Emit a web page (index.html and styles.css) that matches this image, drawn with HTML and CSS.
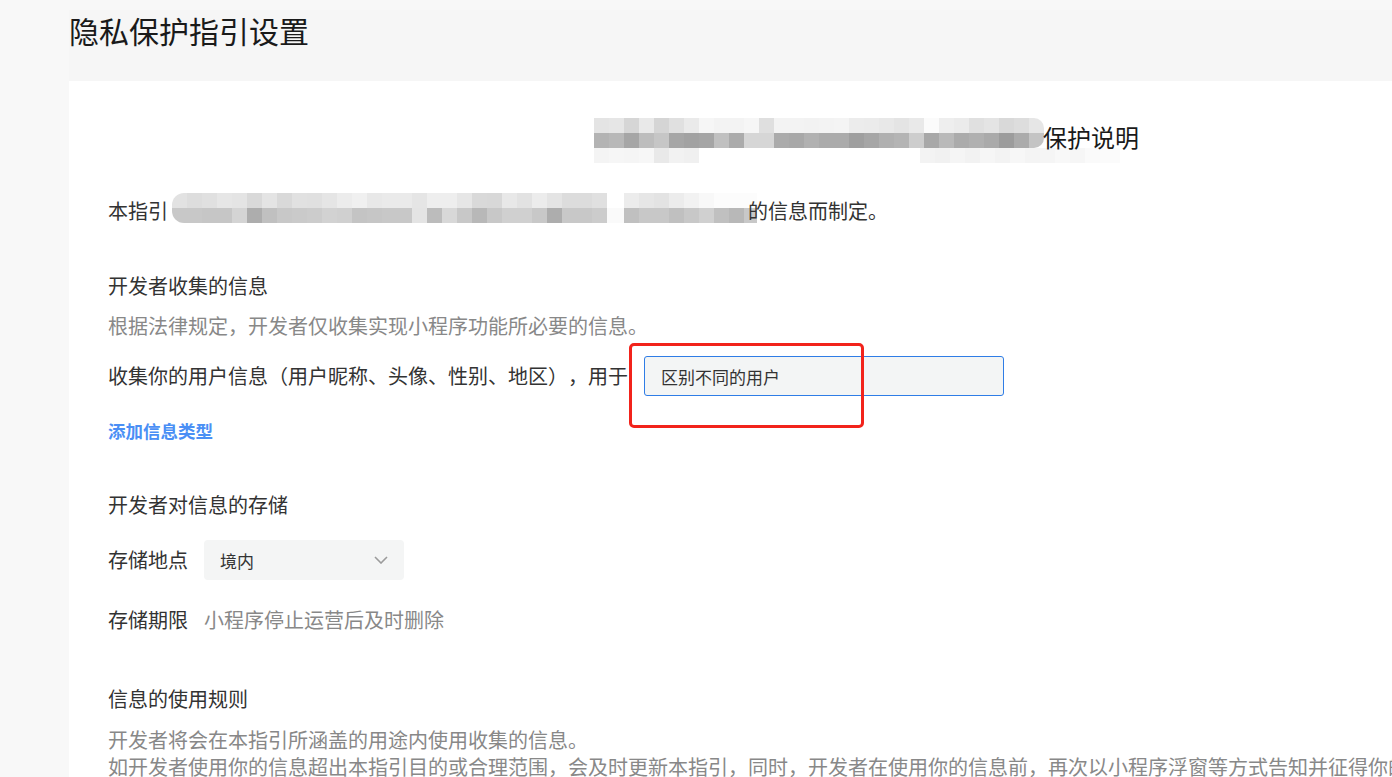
FILE: index.html
```html
<!DOCTYPE html>
<html lang="zh-CN">
<head>
<meta charset="UTF-8">
<meta name="viewport" content="width=device-width, initial-scale=1.0">
<title>隐私保护指引设置</title>
<link rel="stylesheet" href="styles.css">
</head>
<body>

<div class="page">
  <div class="page-head">
    <h1 class="page-title">隐私保护指引设置</h1>
  </div>

  <div class="panel">
    <div class="doc-title">
      <div class="mosaic mosaic-head">
        <div class="m-row head-r1"></div>
        <div class="m-row head-r2"></div>
        <div class="m-row head-r3"></div>
      </div>
      <span class="doc-title-text">保护说明</span>
    </div>

    <div class="intro">
      <span>本指引</span>
      <div class="mosaic mosaic-intro">
        <div class="m-row intro-r1"></div>
        <div class="m-row intro-r2"></div>
      </div>
      <span>的信息而制定。</span>
    </div>

    <!-- 收集的信息 -->
    <div class="section section-collect">
      <h2 class="section-title">开发者收集的信息</h2>
      <p class="hint">根据法律规定，开发者仅收集实现小程序功能所必要的信息。</p>
      <div class="collect-row">
        <span class="collect-label">收集你的用户信息（用户昵称、头像、性别、地区），用于</span>
        <span class="input-wrap">
          <input class="purpose-input" type="text" value="区别不同的用户">
          <span class="mark"></span>
        </span>
      </div>
      <a class="add-link" href="#">添加信息类型</a>
    </div>

    <!-- 存储 -->
    <div class="section section-store">
      <h2 class="section-title">开发者对信息的存储</h2>
      <div class="form-row">
        <span class="form-label">存储地点</span>
        <div class="select">
          <span>境内</span>
          <svg class="chevron" width="14" height="8" viewBox="0 0 14 8">
            <polyline points="1,1 7,7 13,1" fill="none" stroke="#9b9b9b" stroke-width="1.6"/>
          </svg>
        </div>
      </div>
      <div class="form-row form-row-text">
        <span class="form-label">存储期限</span>
        <span class="form-value">小程序停止运营后及时删除</span>
      </div>
    </div>

    <!-- 使用规则 -->
    <div class="section section-use">
      <h2 class="section-title">信息的使用规则</h2>
      <div class="rules">
        <p>开发者将会在本指引所涵盖的用途内使用收集的信息。</p>
        <p>如开发者使用你的信息超出本指引目的或合理范围，会及时更新本指引，同时，开发者在使用你的信息前，再次以小程序浮窗等方式告知并征得你的同意。</p>
      </div>
    </div>
  </div>
</div>

</body>
</html>
```

FILE: styles.css
```css
/* General */
html, body {
  overflow: hidden;
}

body {
  margin: 0;
  padding: 0;
  background-color: #f8f8f8;
  color: #333;
  font-family: "Noto Sans CJK SC", "Noto Sans", sans-serif;
  font-size: 20px;
  text-spacing-trim: space-all;
}

p, h1, h2 {
  margin: 0;
}

.page {
  padding-left: 69px;
  padding-top: 10px;
}

.page-head {
  height: 71px;
  background-color: #f6f6f6;
}

.page-title {
  font-size: 30px;
  font-weight: normal;
  line-height: 40px;
  color: #1a1a1a;
}

.panel {
  background-color: #fff;
  padding: 37px 0 40px 39px;
  height: 700px;
}

/* Mosaic (blurred text) */
.mosaic .m-row {
  height: 15px;
}

.doc-title {
  display: flex;
  align-items: flex-start;
  padding-left: 486px;
  height: 45px;
}

.mosaic-head {
  width: 450px;
  flex: none;
}

.head-r1 {
  border-top-right-radius: 10px;
  background: linear-gradient(90deg, #e4e4e4 15px, #e6e6e6 0 30px, #d6d6d6 0 45px, #e9e9e9 0 60px, #d5d5d5 0 75px, #e0e0e0 0 90px, #eaeaea 0 105px, #f6f6f6 0 120px, #f3f3f3 0 135px, #f3f3f3 0 150px, #f6f6f6 0 165px, #dfdfdf 0 180px, #f3f3f3 0 195px, #f3f3f3 0 210px, #f2f2f2 0 225px, #f3f3f3 0 240px, #f4f4f4 0 255px, #ececec 0 270px, #ebebeb 0 285px, #e8e8e8 0 300px, #e4e4e4 0 315px, #e9e9e9 0 330px, #fbfbfb 0 345px, #eeeeee 0 360px, #ebebeb 0 375px, #e0e0e0 0 390px, #e4e4e4 0 405px, #d9d9d9 0 420px, #dddddd 0 435px, #e6e6e6 0 450px);
}

.head-r2 {
  border-bottom-right-radius: 10px;
  background: linear-gradient(90deg, #b3b3b3 15px, #b8b8b8 0 30px, #a6a6a6 0 45px, #bdbdbd 0 60px, #c6c6c6 0 75px, #a6a6a6 0 90px, #a2a2a2 0 105px, #a5a5a5 0 120px, #c0c0c0 0 135px, #ababab 0 150px, #d6d6d6 0 165px, #d6d6d6 0 180px, #ababab 0 195px, #a8a8a8 0 210px, #b1b1b1 0 225px, #ababab 0 240px, #ababab 0 255px, #9f9f9f 0 270px, #a6a6a6 0 285px, #b0b0b0 0 300px, #b4b4b4 0 315px, #cdcdcd 0 330px, #a8a8a8 0 345px, #b9b9b9 0 360px, #ababab 0 375px, #b0b0b0 0 390px, #aaaaaa 0 405px, #9c9c9c 0 420px, #ababab 0 435px, #c4c4c4 0 450px);
}

.head-r3 {
  width: 526px;
  background: linear-gradient(90deg, #f4f4f4 15px, #f6f6f6 0 30px, #f5f5f5 0 45px, #f7f7f7 0 60px, #e9e9e9 0 75px, #f2f2f2 0 90px, #f0f0f0 0 105px, transparent 0 326px, #f3f3f3 0 341px, #f1f1f1 0 356px, #f5f5f5 0 371px, #f2f2f2 0 386px, #f6f6f6 0 401px, #f3f3f3 0 416px, #f7f7f7 0 431px, #f4f4f4 0 446px, #f5f5f5 0 461px, #f8f8f8 0 476px, #f6f6f6 0 491px, #fafafa 0 506px, #fbfbfb 0 526px);
}

.doc-title-text {
  position: relative;
  font-size: 24px;
  line-height: 38px;
  color: #1a1a1a;
  margin-left: -1px;
}

.intro {
  display: flex;
  align-items: center;
  margin-top: 30px;
  line-height: 30px;
}

.mosaic-intro {
  width: 585px;
  flex: none;
  margin: 0 -9px 6px 4px;
}

.intro-r1 {
  border-top-left-radius: 12px;
  background: linear-gradient(90deg, #e2e2e2 15px, #dddddd 0 30px, #e0e0e0 0 45px, #e6e6e6 0 60px, #e4e4e4 0 75px, #d9d9d9 0 90px, #e4e4e4 0 105px, #d9d9d9 0 120px, #e1e1e1 0 135px, #e0e0e0 0 150px, #e5e5e5 0 165px, #ececec 0 180px, #f0f0f0 0 195px, #e8e8e8 0 210px, #eaeaea 0 225px, #eaeaea 0 240px, #e5e5e5 0 255px, #eeeeee 0 270px, #eeeeee 0 285px, #e6e6e6 0 300px, #d9d9d9 0 315px, #d8d8d8 0 330px, #e8e8e8 0 345px, #e2e2e2 0 360px, #ececec 0 375px, #e4e4e4 0 390px, #dcdcdc 0 405px, #dcdcdc 0 420px, #e0e0e0 0 435px, transparent 0 452px, #ececec 0 467px, #e6e6e6 0 482px, #e3e3e3 0 497px, #ececec 0 512px, #f2f2f2 0 527px, #f8f8f8 0 542px, #fcfcfc 0 585px);
}

.intro-r2 {
  border-bottom-left-radius: 12px;
  background: linear-gradient(90deg, #c8c8c8 15px, #c8c8c8 0 30px, #c6c6c6 0 45px, #c6c6c6 0 60px, #d4d4d4 0 75px, #adadad 0 90px, #c0c0c0 0 105px, #c8c8c8 0 120px, #cacaca 0 135px, #cccccc 0 150px, #d2d2d2 0 165px, #d0d0d0 0 180px, #c4c4c4 0 195px, #c6c6c6 0 210px, #c8c8c8 0 225px, #c8c8c8 0 240px, #e4e4e4 0 255px, #bcbcbc 0 270px, #d8d8d8 0 285px, #c8c8c8 0 300px, #b8b8b8 0 315px, #c8c8c8 0 330px, #d0d0d0 0 345px, #d0d0d0 0 360px, #c8c8c8 0 375px, #adadad 0 390px, #c8c8c8 0 405px, #c8c8c8 0 420px, #cccccc 0 435px, #fafafa 0 452px, #c0c0c0 0 467px, #c8c8c8 0 482px, #c8c8c8 0 497px, #c0c0c0 0 512px, #c8c8c8 0 527px, #d0d0d0 0 542px, #c0c0c0 0 557px, #b8b8b8 0 572px, #c8c8c8 0 585px);
}

/* Sections */
.section-title {
  font-size: 20px;
  font-weight: normal;
  line-height: 30px;
  color: #333;
}

.section-collect {
  margin-top: 42px;
}

.hint {
  margin-top: 10px;
  line-height: 30px;
  color: #888;
}

.collect-row {
  display: flex;
  align-items: center;
  margin-top: 15px;
  height: 40px;
}

.collect-label {
  line-height: 30px;
}

.input-wrap {
  position: relative;
  margin-left: 16px;
}

.purpose-input {
  display: block;
  box-sizing: border-box;
  width: 360px;
  height: 40px;
  padding: 0 16px;
  border: 1px solid #2f7de6;
  border-radius: 3px;
  background-color: #f3f5f5;
  font-family: inherit;
  font-size: 17px;
  color: #333;
  outline: none;
}

/* red annotation box */
.mark {
  position: absolute;
  left: -15px;
  top: -13px;
  width: 235px;
  height: 85px;
  box-sizing: border-box;
  border: 3px solid #f2231b;
  border-radius: 5px;
}

.add-link {
  display: block;
  margin-top: 20px;
  line-height: 30px;
  font-size: 17.5px;
  font-weight: bold;
  color: #4a8ff5;
  text-decoration: none;
}

.section-store {
  margin-top: 44px;
}

.form-row {
  display: flex;
  align-items: center;
  margin-top: 20px;
  height: 40px;
}

.form-row-text {
  margin-top: 25px;
  height: 30px;
}

.form-label {
  width: 96px;
  flex: none;
  line-height: 30px;
}

.select {
  display: flex;
  align-items: center;
  justify-content: space-between;
  box-sizing: border-box;
  width: 200px;
  height: 40px;
  padding: 0 16px;
  border-radius: 4px;
  background-color: #f4f5f5;
  font-size: 17px;
  color: #333;
}

.form-value {
  color: #888;
  line-height: 30px;
}

.section-use {
  margin-top: 49px;
}

.rules {
  margin-top: 12px;
  color: #888;
  line-height: 27px;
  white-space: nowrap;
}
```
